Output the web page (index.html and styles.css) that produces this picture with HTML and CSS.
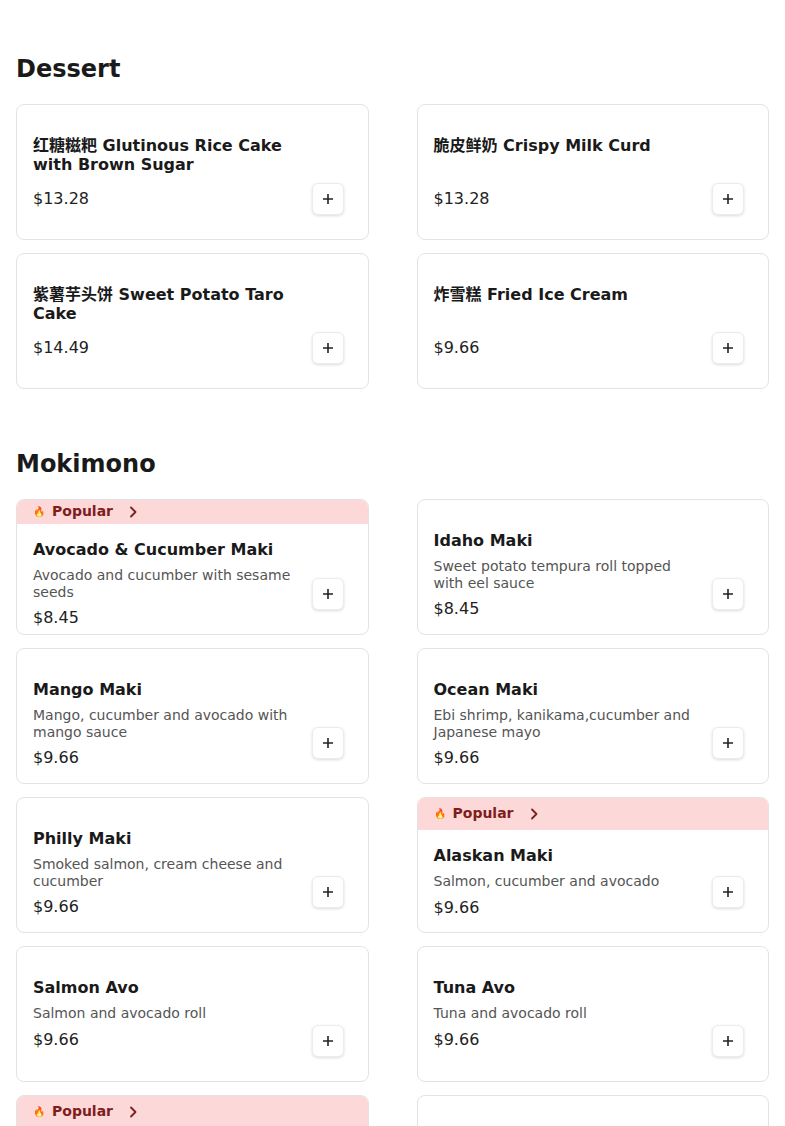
FILE: index.html
```html
<!DOCTYPE html>
<html lang="en">
<head>
<meta charset="utf-8">
<title>Menu</title>
<link rel="stylesheet" href="styles.css">
</head>
<body>
<main class="menu">
  <section class="menu-section">
    <h2 class="section-title">Dessert</h2>
    <div class="grid">
      <article class="card">
        <div class="card-body">
          <div class="info">
            <h3 class="name">红糖糍粑 Glutinous Rice Cake with Brown Sugar</h3>
            <p class="price">$13.28</p>
          </div>
          <button class="add" aria-label="Add"><svg width="12" height="12" viewBox="0 0 12 12"><path d="M6 1v10M1 6h10"/></svg></button>
        </div>
      </article>
      <article class="card">
        <div class="card-body">
          <div class="info">
            <h3 class="name">脆皮鲜奶 Crispy Milk Curd</h3>
            <p class="price">$13.28</p>
          </div>
          <button class="add" aria-label="Add"><svg width="12" height="12" viewBox="0 0 12 12"><path d="M6 1v10M1 6h10"/></svg></button>
        </div>
      </article>
      <article class="card">
        <div class="card-body">
          <div class="info">
            <h3 class="name">紫薯芋头饼 Sweet Potato Taro Cake</h3>
            <p class="price">$14.49</p>
          </div>
          <button class="add" aria-label="Add"><svg width="12" height="12" viewBox="0 0 12 12"><path d="M6 1v10M1 6h10"/></svg></button>
        </div>
      </article>
      <article class="card">
        <div class="card-body">
          <div class="info">
            <h3 class="name">炸雪糕 Fried Ice Cream</h3>
            <p class="price">$9.66</p>
          </div>
          <button class="add" aria-label="Add"><svg width="12" height="12" viewBox="0 0 12 12"><path d="M6 1v10M1 6h10"/></svg></button>
        </div>
      </article>
    </div>
  </section>

  <section class="menu-section">
    <h2 class="section-title">Mokimono</h2>
    <div class="grid">
      <article class="card card--popular">
        <div class="banner"><span class="banner-icon">🔥</span><span>Popular</span><svg class="chev" width="8" height="12" viewBox="0 0 8 12"><path d="M2 1.5 6.5 6 2 10.5"/></svg></div>
        <div class="card-body">
          <div class="info">
            <h3 class="name">Avocado &amp; Cucumber Maki</h3>
            <p class="desc">Avocado and cucumber with sesame seeds</p>
            <p class="price">$8.45</p>
          </div>
          <button class="add" aria-label="Add"><svg width="12" height="12" viewBox="0 0 12 12"><path d="M6 1v10M1 6h10"/></svg></button>
        </div>
      </article>
      <article class="card">
        <div class="card-body">
          <div class="info">
            <h3 class="name">Idaho Maki</h3>
            <p class="desc">Sweet potato tempura roll topped with eel sauce</p>
            <p class="price">$8.45</p>
          </div>
          <button class="add" aria-label="Add"><svg width="12" height="12" viewBox="0 0 12 12"><path d="M6 1v10M1 6h10"/></svg></button>
        </div>
      </article>
      <article class="card">
        <div class="card-body">
          <div class="info">
            <h3 class="name">Mango Maki</h3>
            <p class="desc">Mango, cucumber and avocado with mango sauce</p>
            <p class="price">$9.66</p>
          </div>
          <button class="add" aria-label="Add"><svg width="12" height="12" viewBox="0 0 12 12"><path d="M6 1v10M1 6h10"/></svg></button>
        </div>
      </article>
      <article class="card">
        <div class="card-body">
          <div class="info">
            <h3 class="name">Ocean Maki</h3>
            <p class="desc">Ebi shrimp, kanikama,cucumber and Japanese mayo</p>
            <p class="price">$9.66</p>
          </div>
          <button class="add" aria-label="Add"><svg width="12" height="12" viewBox="0 0 12 12"><path d="M6 1v10M1 6h10"/></svg></button>
        </div>
      </article>
      <article class="card">
        <div class="card-body">
          <div class="info">
            <h3 class="name">Philly Maki</h3>
            <p class="desc">Smoked salmon, cream cheese and cucumber</p>
            <p class="price">$9.66</p>
          </div>
          <button class="add" aria-label="Add"><svg width="12" height="12" viewBox="0 0 12 12"><path d="M6 1v10M1 6h10"/></svg></button>
        </div>
      </article>
      <article class="card card--popular">
        <div class="banner"><span class="banner-icon">🔥</span><span>Popular</span><svg class="chev" width="8" height="12" viewBox="0 0 8 12"><path d="M2 1.5 6.5 6 2 10.5"/></svg></div>
        <div class="card-body">
          <div class="info">
            <h3 class="name">Alaskan Maki</h3>
            <p class="desc">Salmon, cucumber and avocado</p>
            <p class="price">$9.66</p>
          </div>
          <button class="add" aria-label="Add"><svg width="12" height="12" viewBox="0 0 12 12"><path d="M6 1v10M1 6h10"/></svg></button>
        </div>
      </article>
      <article class="card">
        <div class="card-body">
          <div class="info">
            <h3 class="name">Salmon Avo</h3>
            <p class="desc">Salmon and avocado roll</p>
            <p class="price">$9.66</p>
          </div>
          <button class="add" aria-label="Add"><svg width="12" height="12" viewBox="0 0 12 12"><path d="M6 1v10M1 6h10"/></svg></button>
        </div>
      </article>
      <article class="card">
        <div class="card-body">
          <div class="info">
            <h3 class="name">Tuna Avo</h3>
            <p class="desc">Tuna and avocado roll</p>
            <p class="price">$9.66</p>
          </div>
          <button class="add" aria-label="Add"><svg width="12" height="12" viewBox="0 0 12 12"><path d="M6 1v10M1 6h10"/></svg></button>
        </div>
      </article>
      <article class="card card--popular">
        <div class="banner"><span class="banner-icon">🔥</span><span>Popular</span><svg class="chev" width="8" height="12" viewBox="0 0 8 12"><path d="M2 1.5 6.5 6 2 10.5"/></svg></div>
        <div class="card-body">
          <div class="info">
            <h3 class="name">Spicy Tuna Maki</h3>
            <p class="desc">Tuna, cucumber and spicy mayo</p>
            <p class="price">$9.66</p>
          </div>
          <button class="add" aria-label="Add"><svg width="12" height="12" viewBox="0 0 12 12"><path d="M6 1v10M1 6h10"/></svg></button>
        </div>
      </article>
      <article class="card">
        <div class="card-body">
          <div class="info">
            <h3 class="name">Spicy Salmon Maki</h3>
            <p class="desc">Salmon, cucumber and spicy mayo</p>
            <p class="price">$9.66</p>
          </div>
          <button class="add" aria-label="Add"><svg width="12" height="12" viewBox="0 0 12 12"><path d="M6 1v10M1 6h10"/></svg></button>
        </div>
      </article>
    </div>
  </section>
</main>
</body>
</html>
```

FILE: styles.css
```css
* {
  box-sizing: border-box;
}

body {
  margin: 0;
  background: #ffffff;
  color: #1a1a1a;
  font-family: "DejaVu Sans", "Noto Sans CJK SC", sans-serif;
}

.menu {
  padding: 25px 16px 0;
}

.menu-section {
  padding: 30px 0 31px;
}

.section-title {
  margin: 0 0 20px;
  font-size: 24px;
  line-height: 1.2;
  font-weight: 700;
  color: #1a1a1a;
}

.grid {
  display: grid;
  grid-template-columns: 1fr 1fr;
  column-gap: 48px;
  row-gap: 13px;
}

.card {
  height: 136px;
  display: flex;
  flex-direction: column;
  border: 1px solid #e3e3e3;
  border-radius: 8px;
  background: #ffffff;
  overflow: hidden;
}

.banner {
  flex: 1 0 24px;
  min-height: 24px;
  display: flex;
  align-items: center;
  gap: 7px;
  padding: 0 16px;
  background: #fdd8d8;
  color: #7f1d1d;
  font-size: 14px;
  line-height: 1.2;
  font-weight: 700;
}

.banner-icon {
  font-size: 10px;
}

.chev {
  margin-left: 9px;
  fill: none;
  stroke: #7f1d1d;
  stroke-width: 1.8;
  stroke-linecap: round;
  stroke-linejoin: round;
}

.card-body {
  flex: 1 1 auto;
  min-height: 0;
  display: flex;
  gap: 16px;
  padding: 31px 24px 16px 16px;
}

.card--popular .card-body {
  flex: 0 1 auto;
  padding-top: 16px;
  padding-bottom: 14px;
}

.info {
  flex: 1;
  align-self: flex-start;
  min-width: 0;
  min-height: 72px;
  display: flex;
  flex-direction: column;
}

.name {
  margin: 0 0 8px;
  font-size: 16px;
  line-height: 1.2;
  font-weight: 700;
  color: #1a1a1a;
}

.desc {
  margin: 0 0 7px;
  font-size: 14px;
  line-height: 17px;
  color: #555555;
}

.price {
  margin: auto 0 0;
  font-size: 16px;
  line-height: 1.2;
  color: #222222;
}

.add {
  flex: 0 0 32px;
  width: 32px;
  height: 32px;
  align-self: flex-end;
  margin: 0 0 8px;
  padding: 0;
  display: flex;
  align-items: center;
  justify-content: center;
  background: #ffffff;
  border: 1px solid #ececec;
  border-radius: 6px;
  box-shadow: 0 1px 3px rgba(0, 0, 0, 0.14);
}

.card--popular .add {
  margin-bottom: 10px;
}

.add svg {
  fill: none;
  stroke: #222222;
  stroke-width: 1.6;
}
```
